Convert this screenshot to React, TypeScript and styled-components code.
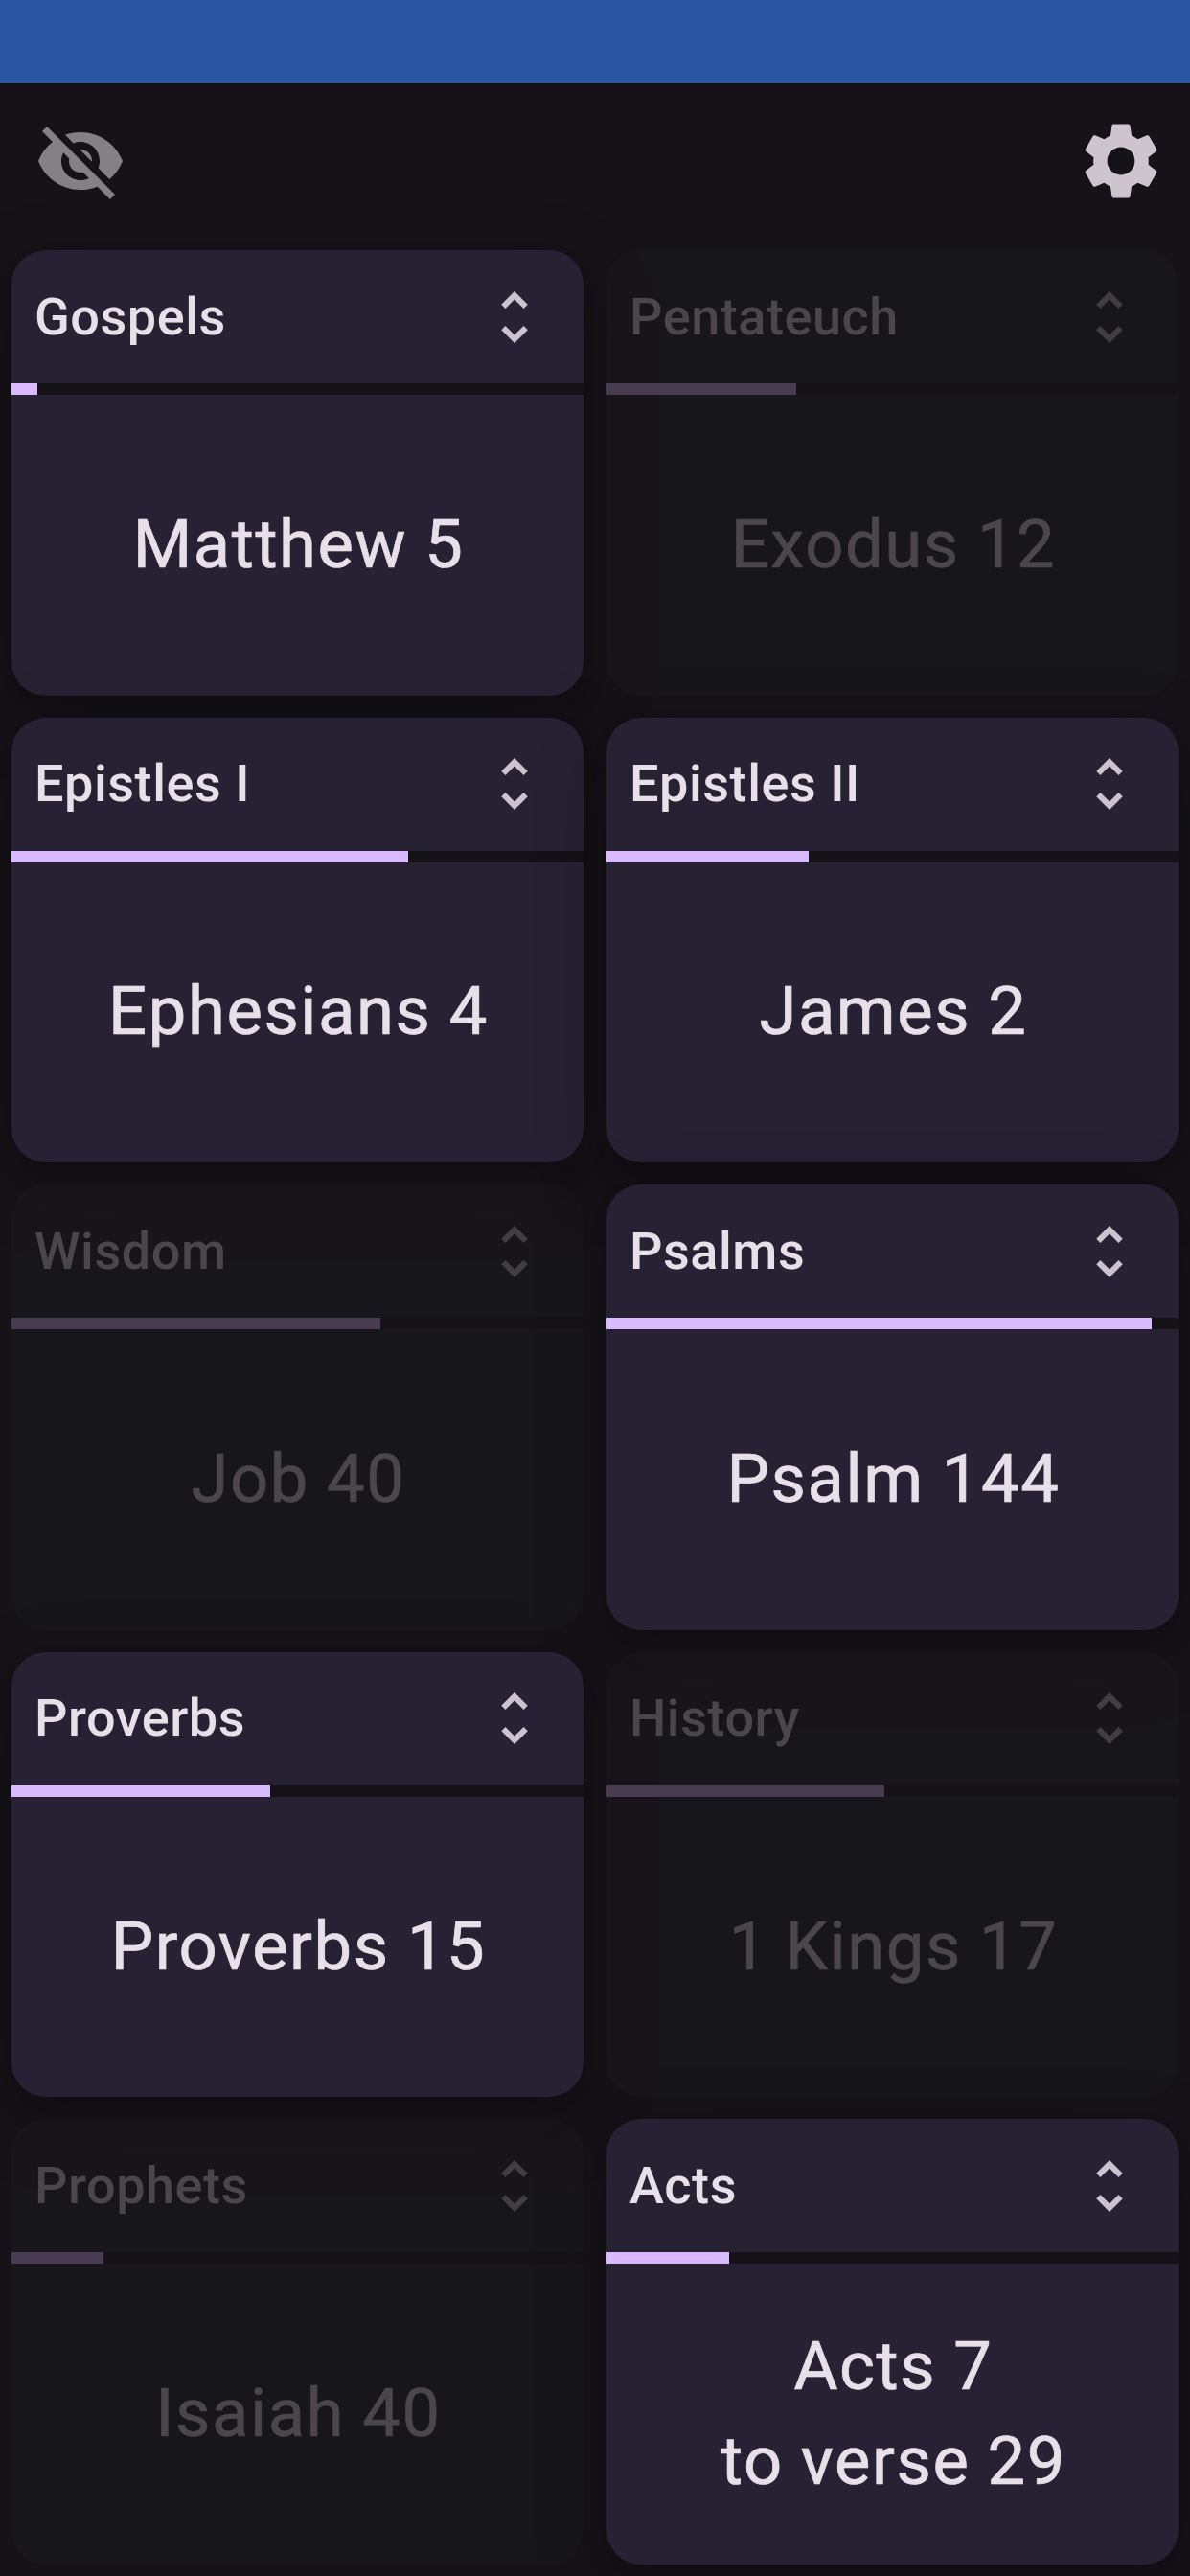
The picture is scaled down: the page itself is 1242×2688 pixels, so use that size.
import React from "react";
import styled, { createGlobalStyle } from "styled-components";
import { MdVisibilityOff, MdSettings, MdUnfoldMore } from "react-icons/md";

const GlobalStyle = createGlobalStyle`
  * { box-sizing: border-box; }
  body {
    margin: 0;
    background: #151317;
    font-family: Roboto, "Liberation Sans", sans-serif;
  }
`;

const Screen = styled.div`
  display: flex;
  flex-direction: column;
  width: 1242px;
  height: 2688px;
  overflow: hidden;
  background: #151317;
`;

const StatusBar = styled.div`
  flex: none;
  height: 87px;
  background: #2b56a1;
`;

const Toolbar = styled.header`
  flex: none;
  display: flex;
  align-items: center;
  justify-content: space-between;
  height: 162px;
  padding: 0 24px 0 36px;
`;

const IconButton = styled.button<{ $muted?: boolean }>`
  display: flex;
  padding: 0;
  border: 0;
  background: none;
  font-size: 96px;
  color: ${(p) => (p.$muted ? "#857f86" : "#cdc4cf")};
`;

const Grid = styled.main`
  flex: 1;
  display: grid;
  grid-template-columns: 1fr 1fr;
  grid-template-rows: repeat(5, 1fr);
  gap: 23px 24px;
  padding: 12px;
`;

const Card = styled.section<{ $done: boolean }>`
  display: flex;
  flex-direction: column;
  min-height: 0;
  border-radius: 36px;
  overflow: hidden;
  color: ${(p) => (p.$done ? "#4a464b" : "#e8e0e8")};
  background: ${(p) => (p.$done ? "rgba(39, 38, 44, 0.15)" : "#272233")};
  box-shadow: ${(p) =>
    p.$done
      ? "none"
      : "0 6px 18px 0 rgba(0,0,0,0.06), 0 24px 75px 0 rgba(0,0,0,0.26)"};
`;

const CardHeader = styled.div`
  flex: none;
  display: flex;
  align-items: center;
  justify-content: space-between;
  height: 139px;
  padding: 0 36px 0 24px;
`;

const ListName = styled.h2`
  margin: 0;
  font-size: 54px;
  font-weight: 500;
  line-height: 72px;
  letter-spacing: 0.55px;
`;

const Unfold = styled(MdUnfoldMore)<{ $done: boolean }>`
  font-size: 72px;
  color: ${(p) => (p.$done ? "#413e43" : "#cbc4cf")};
`;

const Track = styled.div<{ $done: boolean }>`
  flex: none;
  height: 12px;
  background: ${(p) => (p.$done ? "rgba(21, 19, 23, 0.6)" : "#141216")};
`;

const Fill = styled.div<{ $done: boolean }>`
  height: 100%;
  background: ${(p) => (p.$done ? "#483c51" : "#dabaff")};
`;

const Reading = styled.div`
  flex: 1;
  display: flex;
  align-items: center;
  justify-content: center;
  padding: 0 0 1px 2px;
  text-align: center;
  white-space: pre-line;
  font-size: 70.5px;
  line-height: 99px;
  letter-spacing: 1.6px;
  word-spacing: -1px;
  -webkit-text-stroke: 0.7px currentColor;
`;

interface ReadingList {
  name: string;
  reading: string;
  filled: number;
  done?: boolean;
}

const CARD_WIDTH = 597;

const lists: ReadingList[] = [
  { name: "Gospels", reading: "Matthew 5", filled: 27 },
  { name: "Pentateuch", reading: "Exodus 12", filled: 198, done: true },
  { name: "Epistles I", reading: "Ephesians 4", filled: 414 },
  { name: "Epistles II", reading: "James 2", filled: 211 },
  { name: "Wisdom", reading: "Job 40", filled: 385, done: true },
  { name: "Psalms", reading: "Psalm 144", filled: 569 },
  { name: "Proverbs", reading: "Proverbs 15", filled: 270 },
  { name: "History", reading: "1 Kings 17", filled: 290, done: true },
  { name: "Prophets", reading: "Isaiah 40", filled: 96, done: true },
  { name: "Acts", reading: "Acts 7\nto verse 29", filled: 128 },
];

function ListCard({ name, reading, filled, done = false }: ReadingList) {
  return (
    <Card $done={done}>
      <CardHeader>
        <ListName>{name}</ListName>
        <Unfold $done={done} />
      </CardHeader>
      <Track $done={done}>
        <Fill $done={done} style={{ width: `${(filled / CARD_WIDTH) * 100}%` }} />
      </Track>
      <Reading>{reading}</Reading>
    </Card>
  );
}

export default function App() {
  return (
    <Screen>
      <GlobalStyle />
      <StatusBar />
      <Toolbar>
        <IconButton $muted aria-label="Hide completed">
          <MdVisibilityOff />
        </IconButton>
        <IconButton aria-label="Settings">
          <MdSettings />
        </IconButton>
      </Toolbar>
      <Grid>
        {lists.map((list) => (
          <ListCard key={list.name} {...list} />
        ))}
      </Grid>
    </Screen>
  );
}
